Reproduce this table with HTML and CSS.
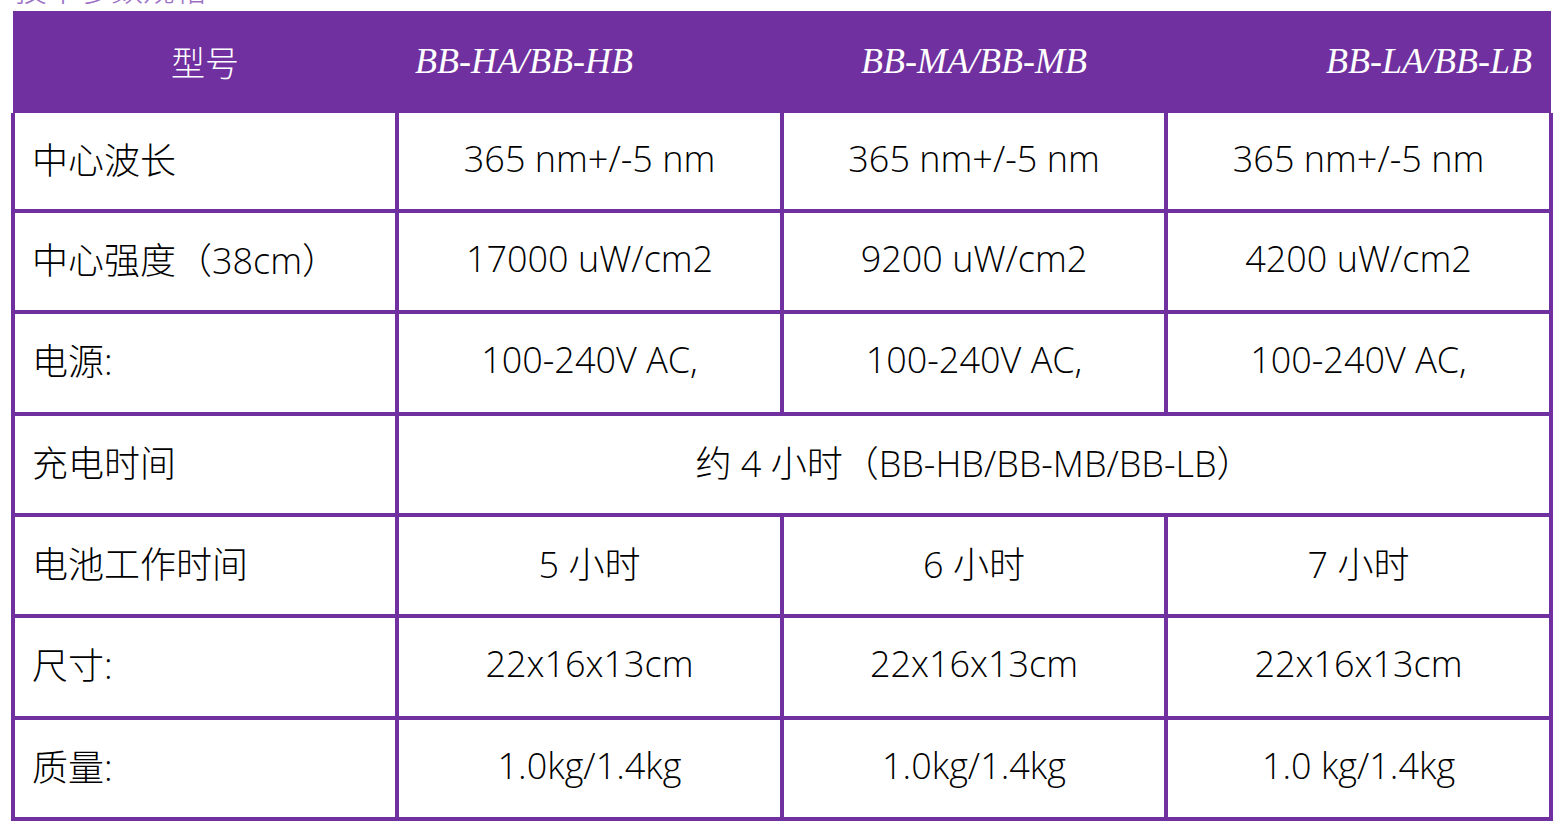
FILE: index.html
```html
<!DOCTYPE html>
<html lang="zh-CN">
<head>
<meta charset="utf-8">
<title>产品参数</title>
<link rel="stylesheet" href="styles.css">
</head>
<body>
<div class="page">
  <div class="title"><span class="title-text">技术参数规格</span></div>
  <div class="head">
    <div class="hcell hc-center cjk">型号</div>
    <div class="hcell hc-left model">BB-HA/BB-HB</div>
    <div class="hcell hc-center model">BB-MA/BB-MB</div>
    <div class="hcell hc-right model">BB-LA/BB-LB</div>
  </div>
  <div class="body">
    <div class="cell label">中心波长</div>
    <div class="cell">365 nm+/-5 nm</div>
    <div class="cell">365 nm+/-5 nm</div>
    <div class="cell">365 nm+/-5 nm</div>

    <div class="cell label">中心强度（38cm）</div>
    <div class="cell">17000 uW/cm2</div>
    <div class="cell">9200 uW/cm2</div>
    <div class="cell">4200 uW/cm2</div>

    <div class="cell label">电源:</div>
    <div class="cell">100-240V AC,</div>
    <div class="cell">100-240V AC,</div>
    <div class="cell">100-240V AC,</div>

    <div class="cell label">充电时间</div>
    <div class="cell span3">约 4 小时（BB-HB/BB-MB/BB-LB）</div>

    <div class="cell label">电池工作时间</div>
    <div class="cell">5 小时</div>
    <div class="cell">6 小时</div>
    <div class="cell">7 小时</div>

    <div class="cell label">尺寸:</div>
    <div class="cell">22x16x13cm</div>
    <div class="cell">22x16x13cm</div>
    <div class="cell">22x16x13cm</div>

    <div class="cell label">质量:</div>
    <div class="cell">1.0kg/1.4kg</div>
    <div class="cell">1.0kg/1.4kg</div>
    <div class="cell">1.0 kg/1.4kg</div>
  </div>
</div>
</body>
</html>
```

FILE: styles.css
```css
html, body {
  margin: 0;
  padding: 0;
  background: #ffffff;
}

.page {
  width: 1542px;
  margin-left: 11px;
  font-family: "Open Sans", "Noto Sans CJK SC", sans-serif;
  font-weight: 300;
  color: #000000;
}

.title {
  height: 11px;
  overflow: hidden;
}

.title-text {
  display: block;
  margin-top: -30px;
  margin-left: 4px;
  font-size: 32px;
  line-height: 34px;
  color: #9b6fc4;
  font-family: "Noto Sans CJK SC", sans-serif;
}

.head {
  margin: 0 2px;
  padding: 0 2px;
  height: 102px;
  background: #7030a0;
  display: grid;
  grid-template-columns: 380px 381px 380px 381px;
  column-gap: 4px;
}

.hcell {
  display: flex;
  align-items: center;
  color: #ffffff;
  padding-bottom: 2px;
}

.hc-center { justify-content: center; }
.hc-left { justify-content: flex-start; padding-left: 16px; }
.hc-right { justify-content: flex-end; padding-right: 17px; }

.cjk {
  font-family: "Noto Sans CJK SC", sans-serif;
  font-weight: 300;
  font-size: 34px;
}

.model {
  font-family: "Liberation Serif", "DejaVu Serif", serif;
  font-style: italic;
  font-weight: 400;
  font-size: 36px;
}

.body {
  background: #7030a0;
  padding: 0 4px 4px 4px;
  display: grid;
  grid-template-columns: 380px 381px 380px 381px;
  grid-template-rows: 96px repeat(6, 97.33px);
  gap: 4px;
}

.cell {
  background: #ffffff;
  display: flex;
  align-items: center;
  justify-content: center;
  font-size: 36px;
  padding-bottom: 6px;
  box-sizing: border-box;
  white-space: nowrap;
}

.label {
  justify-content: flex-start;
  padding-left: 17px;
  font-size: 36px;
}

.span3 {
  grid-column: span 3;
}
```
